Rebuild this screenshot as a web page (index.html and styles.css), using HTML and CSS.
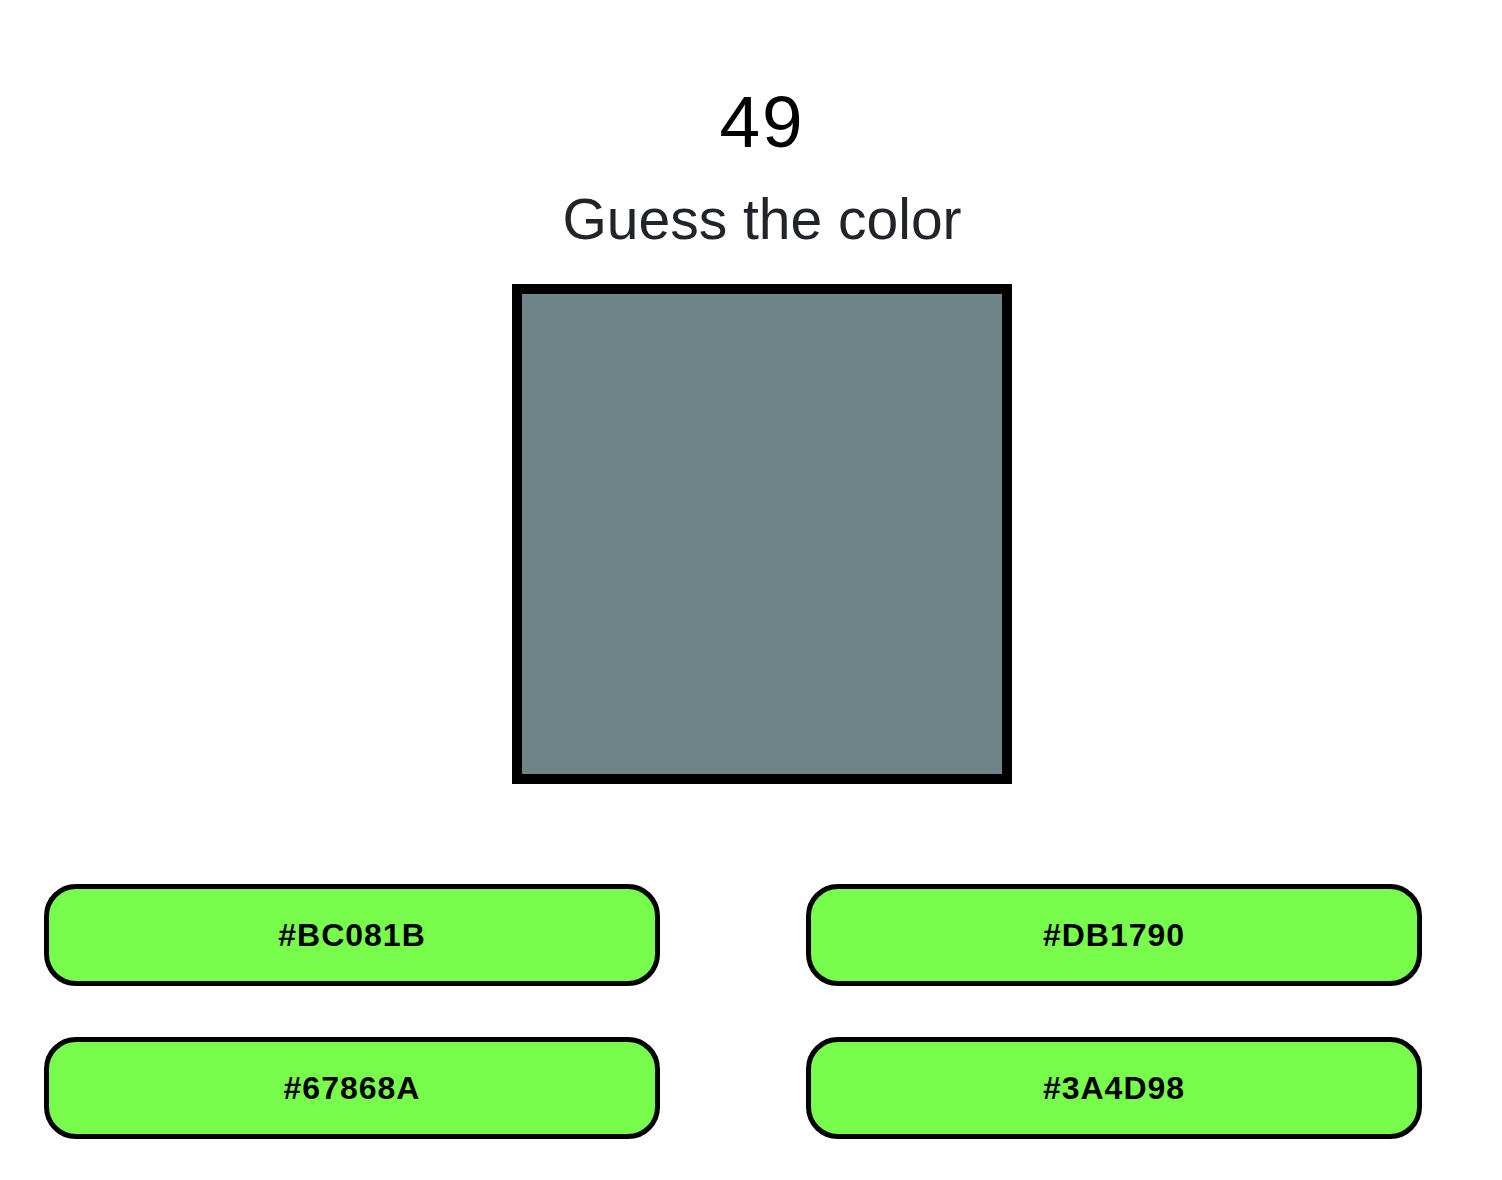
FILE: index.html
```html
<!DOCTYPE html>
<html>
<head>
<meta charset="utf-8">
<link rel="stylesheet" href="styles.css">
</head>
<body>
<div class="app">
  <div class="score">49</div>
  <h1 class="title">Guess the color</h1>
  <div class="swatch-wrap"><div class="swatch"></div></div>
  <div class="options">
    <div class="cell"><button class="opt">#BC081B</button></div>
    <div class="cell"><button class="opt">#DB1790</button></div>
    <div class="cell"><button class="opt">#67868A</button></div>
    <div class="cell"><button class="opt">#3A4D98</button></div>
  </div>
</div>
</body>
</html>
```
FILE: styles.css
```css
html, body {
  margin: 0;
  padding: 0;
  background: #fff;
  overflow: hidden;
}
.app {
  width: 1524px;
  font-family: "Liberation Sans", Arial, sans-serif;
  text-align: center;
  padding-top: 80px;
}
.score {
  font-size: 73px;
  line-height: 84px;
  letter-spacing: 2px;
  color: #000;
}
.title {
  margin: 20px 0 0 0;
  font-size: 57px;
  font-weight: 400;
  line-height: 70px;
  color: #212529;
}
.swatch-wrap {
  display: flex;
  justify-content: center;
  margin-top: 30px;
}
.swatch {
  width: 480px;
  height: 480px;
  border: 10px solid #000;
  background: #6e8589;
}
.options {
  display: grid;
  grid-template-columns: 762px 762px;
  row-gap: 51px;
  margin-top: 100px;
}
.cell {
  text-align: left;
  padding-left: 44px;
}
.opt {
  box-sizing: border-box;
  width: 616px;
  height: 102px;
  border: 5px solid #000;
  border-radius: 32px;
  background: #78fd4d;
  font-family: "Liberation Sans", Arial, sans-serif;
  font-weight: 700;
  font-size: 32px;
  letter-spacing: 1px;
  color: #000;
  padding: 0;
}
```
